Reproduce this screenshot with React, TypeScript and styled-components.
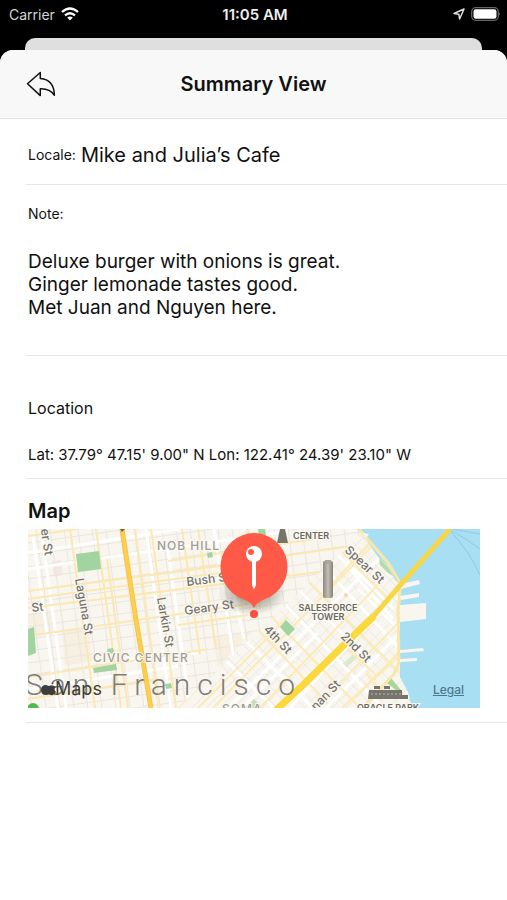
import React from 'react';
import styled, { createGlobalStyle } from 'styled-components';

const GlobalStyle = createGlobalStyle`
  * { box-sizing: border-box; }
  body {
    margin: 0;
    background: #000;
    font-family: Inter, "Liberation Sans", sans-serif;
    color: #111;
  }
`;

const Page = styled.div`
  min-height: 100vh;
  display: flex;
  flex-direction: column;
  background: #000;
`;

const StatusBar = styled.div`
  display: grid;
  grid-template-columns: 1fr auto 1fr;
  align-items: center;
  height: 28px;
  margin-bottom: 10px;
  padding: 0 6px 0 9px;
  color: #fff;
  font-size: 14px;
`;

const StatusGroup = styled.div<{ $end?: boolean }>`
  display: flex;
  align-items: center;
  justify-content: ${(p) => (p.$end ? 'flex-end' : 'flex-start')};
  gap: 6px;
  color: #d4d4d4;
`;

const Clock = styled.time`
  font-size: 15px;
  font-weight: 600;
  color: #eee;
`;

const BackCard = styled.div`
  height: 12px;
  margin: 0 25px;
  border-radius: 10px 10px 0 0;
  background: #dfdfdf;
`;

const Sheet = styled.main`
  flex: 1;
  border-radius: 13px 13px 0 0;
  background: #fff;
  overflow: hidden;
`;

const Header = styled.header`
  display: grid;
  grid-template-columns: 60px 1fr 60px;
  align-items: center;
  height: 69px;
  background: #f8f8f8;
  border-bottom: 1px solid #e2e2e2;
`;

const BackButton = styled.button`
  display: flex;
  justify-content: flex-end;
  padding: 0 4px 0 0;
  border: 0;
  background: none;
  color: #111;
  cursor: pointer;
`;

const Title = styled.h1`
  margin: 0;
  font-size: 20px;
  line-height: 24px;
  font-weight: 600;
  text-align: center;
`;

const Section = styled.section<{ $top: number; $bottom: number }>`
  margin-left: 26px;
  padding: ${(p) => p.$top}px 27px ${(p) => p.$bottom}px 2px;
  border-bottom: 1px solid #e6e6e6;
`;

const LocaleLine = styled.div`
  display: flex;
  align-items: center;
  gap: 5px;
`;

const Label = styled.div`
  font-size: 14px;
  line-height: 20px;
`;

const Coordinates = styled.div`
  font-size: 15px;
  line-height: 20px;
`;

const Place = styled.div`
  font-size: 20px;
  line-height: 24px;
`;

const Note = styled.p`
  margin: 26px 0 0;
  font-size: 19px;
  line-height: 23px;
  white-space: pre-line;
`;

const Subheading = styled.h2`
  margin: 0 0 27px;
  font-size: 16px;
  line-height: 20px;
  font-weight: 400;
`;

const MapHeading = styled.h2`
  margin: 0 0 6px;
  font-size: 20px;
  line-height: 24px;
  font-weight: 600;
`;

const MapFrame = styled.div`
  position: relative;
`;

const MapDrawing = styled.svg`
  display: block;
  width: 100%;
  height: auto;
  font-family: Inter, "Liberation Sans", sans-serif;
`;

const LegalLink = styled.a`
  position: absolute;
  right: 16px;
  bottom: 11px;
  font-size: 12px;
  line-height: 14px;
  font-weight: 500;
  color: #4f7890;
`;

type Line = [number, number, number, number];

const range = (n: number) => Array.from({ length: n }, (_, i) => i);

const whiteStreets: Line[] = [
  [0, 24, 152, 0], [0, 40, 260, 2], [13, 0, 38, 179], [5, 8, 30, 179], [118, 0, 143, 179],
  [140, 20, 162, 179], [0, 160, 150, 137], [100, 130, 170, 124], [186, 0, 206, 130],
  [205, 60, 216, 110],
];

const yellowStreets: Line[] = [
  [0, 7, 50, 0], [0, 62, 200, 36], [0, 70, 220, 40], [0, 79, 300, 42], [0, 107, 220, 75],
  [0, 148, 180, 120], [42, 0, 67, 179], [68, 0, 93, 179], [79, 30, 100, 179], [107, 0, 132, 179],
  [123, 0, 148, 179], [154, 0, 172, 125], [170, 0, 188, 120], [220, 0, 232, 80],
  [140, 44, 330, 16], [140, 32, 300, 8], [150, 96, 220, 86], [0, 170, 130, 150],
];

const somaYellow: Line[] = [
  [150, 179, 332, 0], [185, 179, 345, 16], [170, 179, 260, 88], [236, 80, 332, 179],
  [222, 92, 300, 175], [272, 44, 372, 144], [288, 179, 372, 92], [300, 8, 360, 70],
  [314, 179, 370, 128], [320, 120, 350, 148], [328, 168, 372, 122], [338, 144, 356, 166],
  [232, 179, 350, 56], [345, 10, 300, 60],
];

const somaWhite: Line[] = [
  [206, 100, 285, 179], [254, 72, 355, 179], [290, 32, 372, 120], [200, 179, 352, 28],
  [214, 179, 290, 104], [262, 179, 364, 70], [298, 179, 372, 104], [318, 32, 366, 80],
  [188, 122, 246, 179], [305, 20, 365, 90], [270, 60, 340, 130], [330, 60, 370, 100],
];

const Streets = ({ lines, color, width }: { lines: Line[]; color: string; width: number }) => (
  <g stroke={color} strokeWidth={width}>
    {lines.map(([x1, y1, x2, y2]) => (
      <line key={`${x1}-${y1}-${x2}-${y2}`} x1={x1} y1={y1} x2={x2} y2={y2} />
    ))}
  </g>
);

const StreetName = ({ x, y, angle, children }: { x: number; y: number; angle: number; children: string }) => (
  <text x={x} y={y} fontSize="12" fontWeight="500" fill="#74726e" transform={`rotate(${angle} ${x} ${y})`}
    stroke="#fbf8f1" strokeWidth="2" paintOrder="stroke">
    {children}
  </text>
);

const CityMap = () => (
  <MapDrawing viewBox="0 0 452 179" role="img" aria-label="Map of San Francisco">
    <defs>
      <clipPath id="soma">
        <path d="M150 179 338 0H452V179Z" />
      </clipPath>
      <clipPath id="north">
        <path d="M0 0H338L150 179H0Z" />
      </clipPath>
      <radialGradient id="shade">
        <stop offset="0.3" stopColor="#4a4433" stopOpacity="0.5" />
        <stop offset="1" stopColor="#4a4433" stopOpacity="0" />
      </radialGradient>
      <linearGradient id="tower">
        <stop offset="0" stopColor="#8d8980" />
        <stop offset="0.5" stopColor="#c3bfb5" />
        <stop offset="1" stopColor="#858178" />
      </linearGradient>
    </defs>
    <rect width="452" height="179" fill="#f9f6ef" />

    <g clipPath="url(#north)">
      <g fill="#f7f0e0">
        <path d="M34 102 60 98 64 132 37 137Z" />
        <path d="M0 85 24 82 28 102 0 106Z" />
        <path d="M185 108 225 102 190 138Z" />
      </g>
      <path d="M24 32 33 31 35 46 26 48Z" fill="#f7e7e2" />
      <g stroke="#e9e6e0">
        {range(19).map((i) => (
          <line key={`h${i}`} x1="0" y1={14 + i * 12} x2="340" y2={-34 + i * 12} />
        ))}
        {range(26).map((i) => (
          <line key={`v${i}`} x1={-20 + i * 14} y1="0" x2={4 + i * 14} y2="179" />
        ))}
      </g>
      <Streets lines={whiteStreets} color="#fff" width={3} />
      <Streets lines={yellowStreets} color="#fbe8b2" width={2} />
      <g fill="#a1d4a0">
        <path d="M48 25 71 22 73 40 50 43Z" />
        <path d="M65 139 88 135 89 141 66 144Z" />
        <path d="M0 100 6 98 8 124 0 127Z" />
        <path d="M179 24 184 23 185 28 180 29Z" />
        <path d="M79 120 85 119 86 124 80 125Z" />
        <path d="M137 155 143 154 144 159 138 160Z" />
        <path d="M230 0 237 0 238 6 231 7Z" />
      </g>
    </g>

    <g clipPath="url(#soma)">
      <g stroke="#ece8e1">
        {range(24).map((i) => (
          <line key={`a${i}`} x1={150 + i * 14} y1="179" x2={330 + i * 14} y2="0" />
        ))}
        {range(24).map((i) => (
          <line key={`b${i}`} x1={60 + i * 14} y1="0" x2={235 + i * 14} y2="179" />
        ))}
      </g>
      <path d="M217 179 226 170 234 179Z" fill="#c9ddb8" />
      <path d="M313 136 327 124 330 128 317 140Z" fill="#dfe8d0" />
      <Streets lines={somaWhite} color="#fff" width={3} />
      <Streets lines={somaYellow} color="#fbebb4" width={2} />
      <path d="M252 98 258 91 267 100 260 107Z" fill="#a1d4a0" />
      <circle cx="318" cy="66" r="2" fill="#f9d3b0" />
    </g>

    <path
      d="M329 0 336 7 350 28 361 38 367 51 373 56 372 76 372 148 380 163 384 179H452V0Z"
      fill="#a9dff2"
    />
    <path d="M351 29 361 39 365 47 360 44 352 36Z" fill="#b5dca9" />
    <path d="M359 154 363 149 373 161 369 162Z" fill="#a9d79b" />
    <path d="M331 0 361 35 371 52Q373 63 370 80L371 134 366 145 335 179" fill="none" stroke="#f8e7a9" strokeWidth="3" />
    <g fill="#f9f6ef">
      <path d="M334 4 341 5 338 9Z" />
      <path d="M372 55 391 51 392 55 373 60Z" />
      <path d="M372 67 391 64 391 68 373 71Z" />
      <path d="M372 76 398 74 398 90 372 93Z" />
      <path d="M372 121 395 119 396 122 372 124Z" />
      <path d="M372 130 389 129 389 132 372 133Z" />
    </g>
    <g fill="none" stroke="#8fc8eb">
      <path d="M422 1Q436 8 452 20" />
      <path d="M422 2Q440 20 452 46" />
      <path d="M424 0 452 5" />
    </g>

    <path d="M94 0 108 91 123 179" fill="none" stroke="#f3c457" strokeWidth="5" />
    <path d="M94 0 108 91 123 179" fill="none" stroke="#ffcf48" strokeWidth="3" />
    <path d="M422 0 375 53 344 89" fill="none" stroke="#f7d648" strokeWidth="5" />
    <path d="M346 87 318 114 275 156 248 181" fill="none" stroke="#fbd83c" strokeWidth="7" />

    <rect x="295" y="32" width="10" height="37" rx="2" fill="url(#tower)" />
    <rect x="297" y="31" width="6" height="4" fill="#aaa69c" />
    <path d="M252 0H257L260 14H249Z" fill="#77746c" />
    <g fill="#77746c">
      <path d="M341 161H374V166H380V170H340Z" />
      <path d="M346 157H352V160H346ZM356 157H362V160H356Z" />
    </g>
    <path d="M343 165H374" stroke="#bdb9af" strokeDasharray="2 2" />
    <path d="M92 0H97L94 3Z" fill="#756633" />
    <circle cx="5" cy="180" r="6" fill="#52b951" />

    <StreetName x={11} y={-10} angle={81}>ster St</StreetName>
    <StreetName x={4} y={83} angle={-7}>St</StreetName>
    <StreetName x={47} y={50} angle={80}>Laguna St</StreetName>
    <StreetName x={129} y={69} angle={80}>Larkin St</StreetName>
    <StreetName x={159} y={57} angle={-7}>Bush St</StreetName>
    <StreetName x={157} y={86} angle={-8}>Geary St</StreetName>
    <StreetName x={235} y={101} angle={46}>4th St</StreetName>
    <StreetName x={312} y={108} angle={45}>2nd St</StreetName>
    <StreetName x={316} y={22} angle={43}>Spear St</StreetName>
    <StreetName x={288} y={182} angle={-46}>nan St</StreetName>

    <g fontSize="12" fontWeight="500" letterSpacing="1" fill="#a09e99" stroke="#fbf8f1" strokeWidth="2" paintOrder="stroke">
      <text x="129" y="21">NOB HILL</text>
      <text x="65" y="133">CIVIC CENTER</text>
      <text x="194" y="184">SOMA</text>
    </g>
    <g fontSize="9" fontWeight="600" fill="#6b6965" stroke="#fbf8f1" strokeWidth="2" paintOrder="stroke">
      <text x="265" y="10">CENTER</text>
      <text x="300" y="82" textAnchor="middle">SALESFORCE</text>
      <text x="300" y="91" textAnchor="middle">TOWER</text>
      <text x="360" y="182" textAnchor="middle">ORACLE PARK</text>
    </g>

    <text x="-3" y="166" fontSize="30" letterSpacing="7" fontWeight="300" fill="#7f7d77"
      fontFamily="Roboto, 'Liberation Sans', sans-serif">
      San Francisco
    </text>

    <path
      d="M24 156Q23 154 25 153Q25 155 24 156ZM21 157Q24 155 28 158Q25 160 28 163Q26 167 23 166Q21 165 18 166Q13 166 13 161Q13 156 18 156Z"
      fill="#3d3d3b"
    />
    <text x="27" y="166" fontSize="18" fontWeight="400" fill="#3d3d3b">Maps</text>

    <ellipse cx="224" cy="64" rx="34" ry="22" fill="url(#shade)" />
    <path d="M226 4A34 34 0 0 1 237 70Q229 73 226 79Q223 73 215 70A34 34 0 0 1 226 4Z" fill="#fe5a47" />
    <circle cx="226" cy="85" r="4" fill="#f9503e" />
    <path d="M225 30H227L227 56 226 58 225 56Z" fill="#fff" stroke="#fff" strokeWidth="2" />
    <circle cx="226" cy="25" r="8" fill="#fff" />
    <circle cx="223" cy="23" r="3" fill="#fe5a47" />
  </MapDrawing>
);

const WifiIcon = () => (
  <svg width="18" height="14" viewBox="0 0 18 14" fill="none" stroke="#fff" strokeWidth="2.3" aria-hidden="true">
    <path d="M1 5Q9 -2 17 5" />
    <path d="M4 8.4Q9 4 14 8.4" />
    <path d="M9 13.4 6.2 10.6Q9 8.6 11.8 10.6Z" fill="#fff" stroke="none" />
  </svg>
);

const LocationIcon = () => (
  <svg width="12" height="12" viewBox="0 0 12 12" fill="none" stroke="#ddd" strokeWidth="1.5" strokeLinejoin="round" aria-hidden="true">
    <path d="M11 1 1 5.5 5.8 6.2 6.6 11Z" />
  </svg>
);

const BatteryIcon = () => (
  <svg width="30" height="14" viewBox="0 0 30 14" aria-hidden="true">
    <rect x="0.7" y="0.7" width="26.6" height="12.6" rx="4" fill="none" stroke="#666" strokeWidth="1.3" />
    <rect x="2.5" y="2.3" width="23" height="9.4" rx="2.3" fill="#fff" />
    <path d="M28.3 4.7Q30 7 28.3 9.3Z" fill="#777" />
  </svg>
);

const ReplyIcon = () => (
  <svg width="30" height="26" viewBox="0 0 30 26" fill="none" stroke="currentColor" strokeWidth="1.5" strokeLinejoin="round" aria-hidden="true">
    <path d="M1.5 12.8 14.3 1.5V7.4C23 8 28.2 13.5 28.4 24.3C25 19 21 17.6 14.3 17.8V24.6Z" />
  </svg>
);

export default function App() {
  return (
    <>
      <GlobalStyle />
      <Page>
        <StatusBar>
          <StatusGroup>
            <span>Carrier</span>
            <WifiIcon />
          </StatusGroup>
          <Clock>11:05 AM</Clock>
          <StatusGroup $end>
            <LocationIcon />
            <BatteryIcon />
          </StatusGroup>
        </StatusBar>
        <BackCard />
        <Sheet>
          <Header>
            <BackButton type="button" aria-label="Back">
              <ReplyIcon />
            </BackButton>
            <Title>Summary View</Title>
          </Header>
          <Section $top={24} $bottom={17}>
            <LocaleLine>
              <Label>Locale:</Label>
              <Place>Mike and Julia’s Cafe</Place>
            </LocaleLine>
          </Section>
          <Section $top={19} $bottom={36}>
            <Label>Note:</Label>
            <Note>{'Deluxe burger with onions is great.\nGinger lemonade tastes good.\nMet Juan and Nguyen here.'}</Note>
          </Section>
          <Section $top={42} $bottom={13}>
            <Subheading>Location</Subheading>
            <Coordinates>{`Lat: 37.79° 47.15' 9.00" N Lon: 122.41° 24.39' 23.10" W`}</Coordinates>
          </Section>
          <Section $top={20} $bottom={14}>
            <MapHeading>Map</MapHeading>
            <MapFrame>
              <CityMap />
              <LegalLink href="#legal">Legal</LegalLink>
            </MapFrame>
          </Section>
        </Sheet>
      </Page>
    </>
  );
}
